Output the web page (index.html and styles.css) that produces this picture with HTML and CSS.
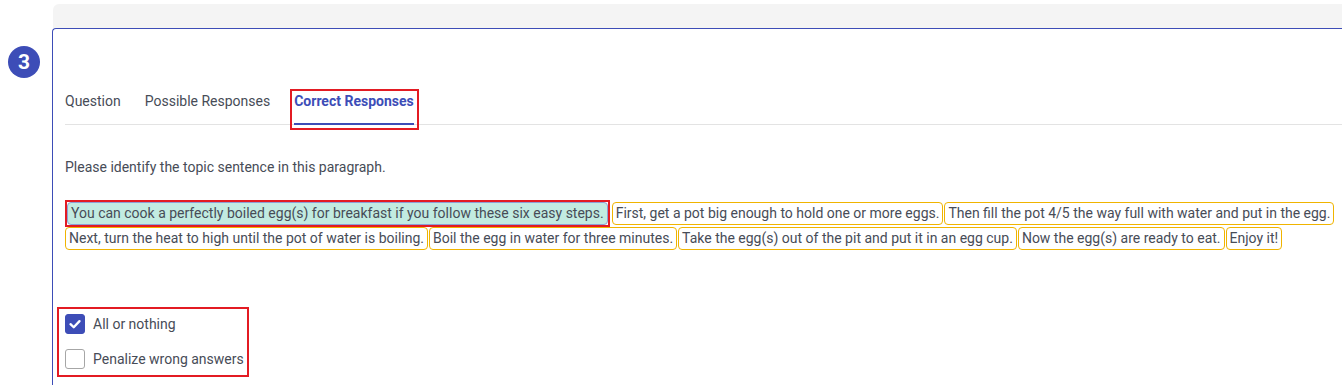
FILE: index.html
```html
<!DOCTYPE html>
<html>
<head>
<meta charset="utf-8">
<link rel="stylesheet" href="styles.css">
</head>
<body>
<div class="page">
  <div class="step-col">
    <div class="step">3</div>
  </div>
  <div class="main">
    <div class="topbar"></div>
    <div class="card">
      <div class="tabs">
        <div class="tab">Question</div>
        <div class="tab">Possible Responses</div>
        <div class="tab active">Correct Responses</div>
      </div>
      <p class="prompt">Please identify the topic sentence in this paragraph.</p>
      <div class="chips">
        <span class="chip selected">You can cook a perfectly boiled egg(s) for breakfast if you follow these six easy steps.</span>
        <span class="chip">First, get a pot big enough to hold one or more eggs.</span>
        <span class="chip">Then fill the pot 4/5 the way full with water and put in the egg.</span>
        <span class="chip">Next, turn the heat to high until the pot of water is boiling.</span>
        <span class="chip">Boil the egg in water for three minutes.</span>
        <span class="chip">Take the egg(s) out of the pit and put it in an egg cup.</span>
        <span class="chip">Now the egg(s) are ready to eat.</span>
        <span class="chip">Enjoy it!</span>
      </div>
      <div class="options">
        <label class="option">
          <span class="box checked">
            <svg viewBox="0 0 20 20" width="20" height="20"><path d="M5 10.2 L8.6 13.6 L15 6.8" fill="none" stroke="#fff" stroke-width="2.6" stroke-linecap="round" stroke-linejoin="round"/></svg>
          </span>
          <span class="label">All or nothing</span>
        </label>
        <label class="option">
          <span class="box"></span>
          <span class="label">Penalize wrong answers</span>
        </label>
      </div>
    </div>
  </div>
</div>
</body>
</html>
```

FILE: styles.css
```css
* { box-sizing: border-box; }
html, body { margin: 0; padding: 0; background: #fff; }
body {
  font-family: Roboto, "Liberation Sans", Arial, sans-serif;
  color: #474c57;
  width: 1342px;
  height: 385px;
  overflow: hidden;
}
.page {
  display: flex;
  height: 385px;
}
.step-col {
  width: 52px;
  flex: none;
  padding: 46px 0 0 8px;
}
.step {
  width: 32px;
  height: 32px;
  border-radius: 50%;
  background: #3d4db7;
  color: #fff;
  font-weight: 700;
  font-size: 21px;
  display: flex;
  align-items: center;
  justify-content: center;
  line-height: 1;
}
.main {
  flex: 1;
  min-width: 0;
  display: flex;
  flex-direction: column;
  padding-top: 4px;
}
.topbar {
  flex: none;
  height: 24px;
  background: #f4f4f4;
  border-top-left-radius: 6px;
  margin-left: 1px;
}
.card {
  flex: 1 0 auto;
  border-top: 1px solid #3d4db7;
  border-left: 1px solid #3d4db7;
  border-top-left-radius: 4px;
  padding: 64px 0 0 12px;
}
.tabs {
  display: flex;
  gap: 24px;
  border-bottom: 1px solid #e3e3e3;
  height: 32px;
}
.tab {
  font-size: 14px;
  color: #474c57;
  height: 31px;
  line-height: 16px;
}
.tab.active {
  position: relative;
  color: #3d4db7;
  font-weight: 700;
  border-bottom: 2px solid #3d4db7;
  height: 32px;
}
.tab.active::after {
  content: "";
  position: absolute;
  top: -4px;
  left: -4px;
  right: -5px;
  bottom: -7px;
  border: 2px solid #e31b23;
}
.prompt {
  margin: 34px 0 0;
  font-size: 14px;
  line-height: 16px;
}
.chips {
  margin-top: 27px;
  display: flex;
  flex-wrap: wrap;
  gap: 2px 1px;
}
.chip {
  font-size: 14px;
  line-height: 21px;
  height: 23px;
  padding: 0 3px;
  border: 1px solid #f0b400;
  border-radius: 4px;
  color: #474c57;
  white-space: nowrap;
}
.chip.selected {
  position: relative;
  background: #c2ebe1;
  border-color: #8f9fd4;
  margin-left: 2px;
  margin-right: 3px;
}
.chip.selected::after {
  content: "";
  position: absolute;
  top: -3px;
  left: -3px;
  right: -3px;
  bottom: -3px;
  border: 2px solid #e31b23;
}
.options {
  margin-top: 59px;
  margin-left: -6px;
  display: flex;
  flex-direction: column;
  gap: 15px;
  outline: 2px solid #e31b23;
  padding: 5px 6px 6px 6px;
  width: 188px;
}
.option {
  display: flex;
  align-items: center;
  gap: 8px;
  height: 20px;
}
.box {
  width: 20px;
  height: 20px;
  border: 1px solid #a6a6a6;
  border-radius: 3px;
  display: flex;
  align-items: center;
  justify-content: center;
  flex: none;
}
.box.checked {
  background: #3d4db7;
  border-color: #3d4db7;
}
.box svg { display: block; }
.label {
  font-size: 14px;
  color: #474c57;
  white-space: nowrap;
}
```
